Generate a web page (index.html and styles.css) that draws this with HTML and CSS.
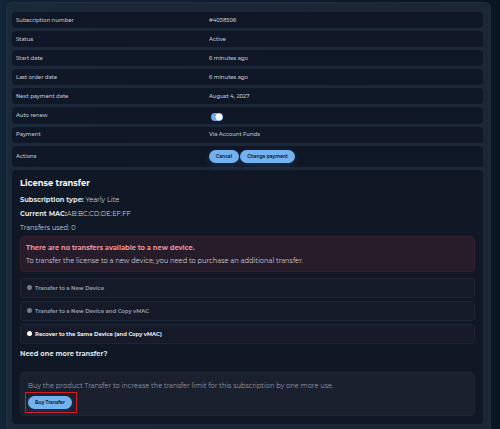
FILE: index.html
```html
<!DOCTYPE html>
<html lang="en">
<head>
<meta charset="utf-8">
<title>Subscription</title>
<link rel="stylesheet" href="styles.css">
</head>
<body>
<main class="panel">
  <dl class="details">
    <div class="row"><dt>Subscription number</dt><dd>#4038506</dd></div>
    <div class="row"><dt>Status</dt><dd>Active</dd></div>
    <div class="row"><dt>Start date</dt><dd>6 minutes ago</dd></div>
    <div class="row"><dt>Last order date</dt><dd>6 minutes ago</dd></div>
    <div class="row"><dt>Next payment date</dt><dd>August 4, 2027</dd></div>
    <div class="row row-renew"><dt>Auto renew</dt><dd><span class="toggle"></span></dd></div>
    <div class="row row-payment"><dt>Payment</dt><dd>Via Account Funds</dd></div>
    <div class="row row-actions"><dt>Actions</dt><dd class="actions"><button class="btn btn-cancel">Cancel</button><button class="btn btn-change">Change payment</button></dd></div>
  </dl>
  <section class="license">
    <h2>License transfer</h2>
    <p class="info"><b>Subscription type:</b> Yearly Lite</p>
    <p class="info"><b>Current MAC:</b>AB:BC:CD:DE:EF:FF</p>
    <p class="info">Transfers used: 0</p>
    <div class="alert">
      <strong>There are no transfers available to a new device.</strong>
      <p>To transfer the license to a new device, you need to purchase an additional transfer.</p>
    </div>
    <div class="options">
      <div class="option"><i></i><span>Transfer to a New Device</span></div>
      <div class="option"><i></i><span>Transfer to a New Device and Copy vMAC</span></div>
      <div class="option enabled"><i></i><span>Recover to the Same Device (and Copy vMAC)</span></div>
    </div>
    <h3>Need one more transfer?</h3>
    <div class="buy">
      <p>Buy the product Transfer to increase the transfer limit for this subscription by one more use.</p>
      <div class="highlight"><button class="btn btn-buy">Buy Transfer</button></div>
    </div>
  </section>
</main>
</body>
</html>
```

FILE: styles.css
```css
* { box-sizing: border-box; }
html { height: 429px; overflow: hidden; background: #0d1825; }
body {
  margin: 0;
  height: 429px;
  padding: 2px 9px 0 6px;
  overflow: hidden;
  background: linear-gradient(90deg, #14283a 0, #102235 7px, #0b1625 490px, #0a1521 100%);
  color: #c8ced9;
  font-family: Montserrat, Inter, sans-serif;
  font-size: 5.35px;
  font-weight: 500;
}
p, dl, dd, h2, h3 { margin: 0; }
.panel {
  height: 440px;
  padding: 9px 7px 0 5px;
  border: 1px solid #213040;
  border-radius: 6px;
  background: linear-gradient(90deg, #192a3a, #1b2837 40px, #1c2635);
}
.details { display: flex; flex-direction: column; gap: 3px; }
.row {
  display: grid;
  grid-template-columns: 193px 1fr;
  align-items: center;
  height: 16px;
  padding-left: 4px;
  border-radius: 4px;
  background: #101827;
}
.row-renew { height: 17px; padding-bottom: 2px; }
.row-payment { height: 16px; padding-bottom: 2px; }
.row-actions { height: 21px; padding-bottom: 1px; }
.toggle {
  display: block;
  width: 12px;
  height: 8px;
  margin: 4px 0 0 2px;
  border-radius: 4px;
  background: radial-gradient(circle at 8px 4px, #f5f8fc 3.3px, #70abeb 3.8px);
}
.actions { display: flex; gap: 1px; }
.btn {
  display: block;
  height: 13px;
  padding: 0;
  border: 0;
  border-radius: 7px;
  background: #73b1ef;
  color: #14263d;
  font: 700 4.5px/13px Montserrat, Inter, sans-serif;
  text-align: center;
  white-space: nowrap;
  box-shadow: 0 3px 8px #4b91d52e;
}
.btn-cancel { width: 30px; }
.btn-change { width: 55px; }
.license {
  height: 254px;
  margin-top: 3px;
  padding: 6px 8px 0;
  border-radius: 4px;
  background: #101725;
}
h2 { color: #f6f8fc; font-size: 8.35px; line-height: 15px; }
.info { height: 14px; font-size: 6.7px; line-height: 14px; font-weight: 400; white-space: nowrap; }
h2 + .info { margin-top: 2px; }
.info b { color: #dce1e9; }
.alert {
  height: 36px;
  margin-top: 1px;
  padding: 6px 5px 0;
  border: 1px solid #35202d;
  border-radius: 4px;
  background: #271c2a;
  font-size: 6.7px;
  font-weight: 400;
  white-space: nowrap;
}
.alert strong { display: block; height: 13px; line-height: 11px; color: #ec9298; }
.alert p { line-height: 11px; }
.options { display: flex; flex-direction: column; gap: 3px; margin-top: 6px; }
.option {
  display: flex;
  align-items: center;
  gap: 3px;
  height: 20px;
  padding: 0 0 1px 6px;
  border: 1px solid #1c2636;
  border-radius: 3px;
  background: #161b2a;
  color: #8b92a1;
  font-size: 5.3px;
  font-weight: 700;
}
.option i { width: 5px; height: 5px; border-radius: 50%; background: #747b8b; }
.option.enabled { background: #171a29; color: #e9edf4; }
.option.enabled i { background: #fff; }
h3 { margin-top: 4px; padding-top: 1px; color: #dce1e9; font-size: 6.7px; line-height: 11px; }
.buy {
  height: 44px;
  margin-top: 12px;
  padding: 8px 0 0 5px;
  border: 1px solid #1e2635;
  border-radius: 4px;
  background: #1b202e;
  color: #9299a7;
  font-size: 6.68px;
  font-weight: 400;
  line-height: 10px;
}
.buy p { margin-left: 2px; white-space: nowrap; }
.highlight { width: 52px; height: 21px; margin: 1px 0 0 -1px; padding: 3px 2px; border: 1px solid #d61b24; }
.btn-buy { width: 44px; }
```
